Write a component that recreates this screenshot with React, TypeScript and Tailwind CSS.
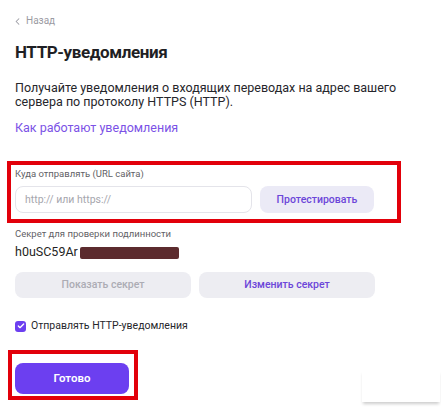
import React, { useState } from 'react';
import { ChevronLeft, Check } from 'lucide-react';

export default function App() {
  const [enabled, setEnabled] = useState(true);

  return (
    <div className="relative w-[441px] h-[407px] overflow-hidden bg-white font-['Roboto',sans-serif] text-[#1f1f24]">
      <div className="pt-[15px]">
        {/* Back link */}
        <button type="button" className="flex items-center gap-[3px] pl-[12px] text-[10px] leading-[12px] text-[#9b9ba3]">
          <ChevronLeft className="w-[11px] h-[11px]" strokeWidth={2.2} />
          <span>Назад</span>
        </button>

        <h1 className="mt-[14px] pl-[15px] text-[17px] leading-[22px] font-bold tracking-[-0.4px]">
          HTTP-уведомления
        </h1>

        <p className="mt-[18px] pl-[15px] pr-[30px] text-[12.5px] leading-[14px] text-[#26262b]">
          Получайте уведомления о входящих переводах на адрес вашего сервера по протоколу HTTPS (HTTP).
        </p>

        <a href="#" className="block mt-[12px] pl-[15px] text-[12.5px] leading-[14px] text-[#7b52e6]">
          Как работают уведомления
        </a>

        {/* URL field */}
        <div className="mt-[26px] ml-[7px] w-[394px] h-[62px] border-[4px] border-[#e2000a] pl-[4px] pt-[3px]">
          <div className="text-[9.5px] leading-[11px] text-[#5f5f66]">Куда отправлять (URL сайта)</div>
          <div className="mt-[7px] flex gap-[8px]">
            <input
              type="text"
              placeholder="http:// или https://"
              className="w-[237px] h-[27px] rounded-[8px] border border-[#e4e4ea] px-[9px] text-[10.5px] placeholder:text-[#a6a6ad] outline-none"
            />
            <button type="button" className="w-[114px] h-[27px] rounded-[8px] bg-[#ebeaf6] text-[10.5px] font-medium text-[#6c46d9]">
              Протестировать
            </button>
          </div>
        </div>

        {/* Secret */}
        <div className="mt-[5px] pl-[15px] text-[9.5px] leading-[11px] text-[#5f5f66]">Секрет для проверки подлинности</div>
        <div className="mt-[5px] pl-[15px] flex items-center text-[12.5px] leading-[14px] text-[#1f1f24]">
          <span>h0uSC59Ar</span>
          <span className="ml-[2px] mt-[3px] w-[99px] h-[12px] bg-[#5c2b2e] rounded-[2px]" />
        </div>

        <div className="mt-[13px] pl-[15px] flex gap-[8px]">
          <button type="button" className="w-[176px] h-[26px] rounded-[8px] bg-[#ededf2] text-[10.5px] font-medium text-[#acacb4]">
            Показать секрет
          </button>
          <button type="button" className="w-[176px] h-[26px] rounded-[8px] bg-[#ededf2] text-[10.5px] font-medium text-[#6c46d9]">
            Изменить секрет
          </button>
        </div>

        {/* Checkbox */}
        <label className="mt-[22px] pl-[15px] flex items-center gap-[5px] text-[10.5px] leading-[12px] text-[#26262b] cursor-pointer">
          <span
            onClick={() => setEnabled(!enabled)}
            className={`w-[11px] h-[11px] rounded-[3px] flex items-center justify-center ${enabled ? 'bg-[#6c3ff0]' : 'border border-[#bbb]'}`}
          >
            {enabled && <Check className="w-[8px] h-[8px] text-white" strokeWidth={4} />}
          </span>
          <span>Отправлять HTTP-уведомления</span>
        </label>

        {/* Done */}
        <div className="mt-[18px] ml-[8px] w-[130px] h-[50px] border-[4px] border-[#e2000a] pl-[3px] pt-[9px]">
          <button type="button" className="w-[114px] h-[31px] rounded-[8px] bg-[#6c3ff0] text-[11.5px] font-semibold text-white">
            Готово
          </button>
        </div>
      </div>

      {/* edge of a floating element below */}
      <div className="absolute left-[362px] top-[370px] w-[78px] h-[32px] bg-white shadow-[0_3px_3px_-1px_rgba(0,0,0,0.2)]" />
    </div>
  );
}
